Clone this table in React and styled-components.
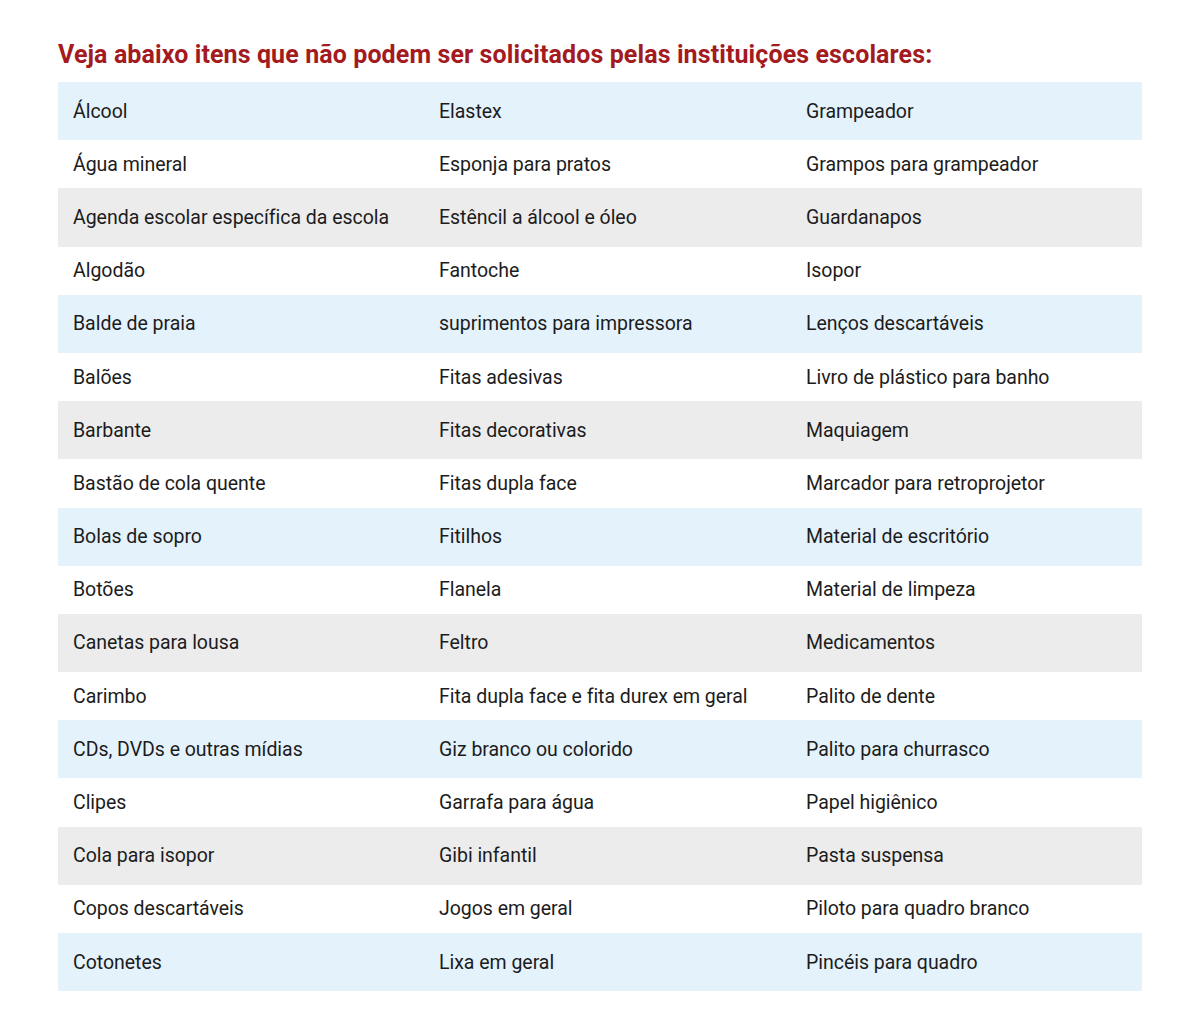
import styled, { createGlobalStyle } from "styled-components";

const GlobalStyle = createGlobalStyle`
  body {
    margin: 0;
    background: #ffffff;
    font-family: Roboto, "Liberation Sans", sans-serif;
  }
`;

const rows = [
  ["Álcool", "Elastex", "Grampeador"],
  ["Água mineral", "Esponja para pratos", "Grampos para grampeador"],
  ["Agenda escolar específica da escola", "Estêncil a álcool e óleo", "Guardanapos"],
  ["Algodão", "Fantoche", "Isopor"],
  ["Balde de praia", "suprimentos para impressora", "Lenços descartáveis"],
  ["Balões", "Fitas adesivas", "Livro de plástico para banho"],
  ["Barbante", "Fitas decorativas", "Maquiagem"],
  ["Bastão de cola quente", "Fitas dupla face", "Marcador para retroprojetor"],
  ["Bolas de sopro", "Fitilhos", "Material de escritório"],
  ["Botões", "Flanela", "Material de limpeza"],
  ["Canetas para lousa", "Feltro", "Medicamentos"],
  ["Carimbo", "Fita dupla face e fita durex em geral", "Palito de dente"],
  ["CDs, DVDs e outras mídias", "Giz branco ou colorido", "Palito para churrasco"],
  ["Clipes", "Garrafa para água", "Papel higiênico"],
  ["Cola para isopor", "Gibi infantil", "Pasta suspensa"],
  ["Copos descartáveis", "Jogos em geral", "Piloto para quadro branco"],
  ["Cotonetes", "Lixa em geral", "Pincéis para quadro"],
];

// blue, white, gray, white ...
const tones = ["blue", "white", "gray", "white"];

const backgrounds = {
  blue: "#e4f2fc",
  white: "#ffffff",
  gray: "#ececec",
};

const Page = styled.div`
  padding: 39px 58px 30px 58px;
  width: 1084px;
`;

const Title = styled.h2`
  margin: 0 0 11px 0;
  color: #a31a1f;
  font-size: 25px;
  font-weight: 700;
  letter-spacing: 0.1px;
  line-height: 32px;
`;

const Table = styled.div`
  display: flex;
  flex-direction: column;
`;

const Row = styled.div`
  display: grid;
  grid-template-columns: 366px 367px 1fr;
  align-items: center;
  height: ${(p) => (p.$tone === "white" ? "48.2px" : "58.2px")};
  background: ${(p) => backgrounds[p.$tone]};
`;

const Cell = styled.div`
  padding-left: 15px;
  color: #1c1c1c;
  font-size: 19.5px;
  letter-spacing: -0.03px;
  white-space: nowrap;
`;

export default function App() {
  return (
    <>
      <GlobalStyle />
      <Page>
        <Title>Veja abaixo itens que não podem ser solicitados pelas instituições escolares:</Title>
        <Table>
          {rows.map((row, i) => (
            <Row key={i} $tone={tones[i % 4]}>
              {row.map((item) => (
                <Cell key={item}>{item}</Cell>
              ))}
            </Row>
          ))}
        </Table>
      </Page>
    </>
  );
}
